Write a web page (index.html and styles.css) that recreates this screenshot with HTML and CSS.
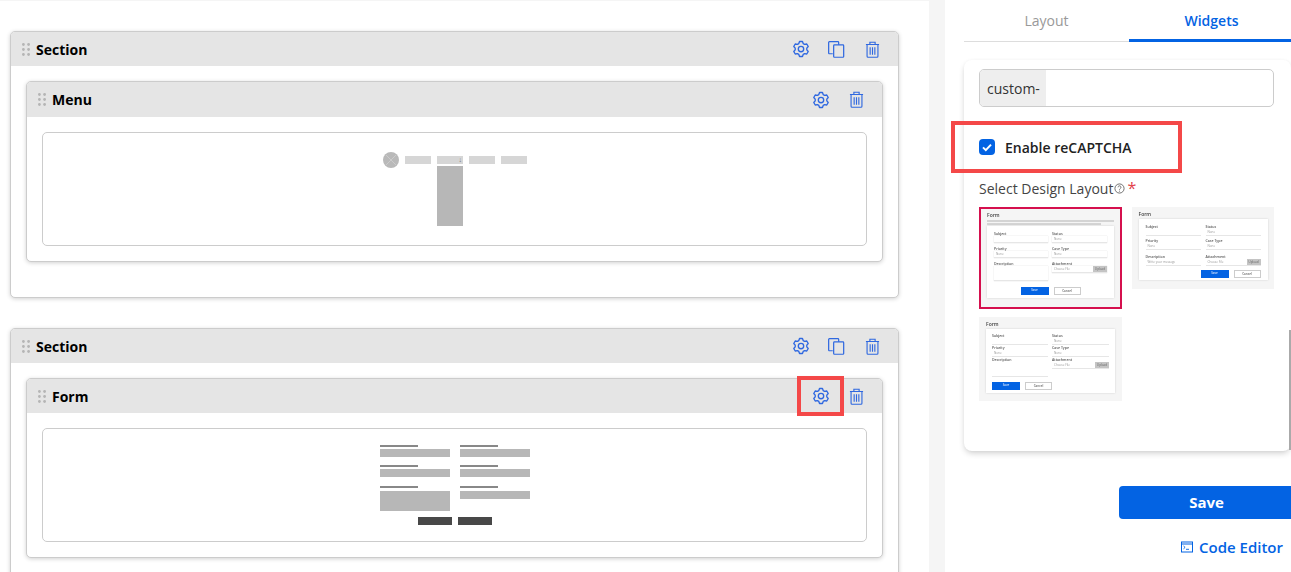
FILE: index.html
```html
<!DOCTYPE html>
<html lang="en">
<head>
    <meta charset="UTF-8">
    <meta name="viewport" content="width=device-width, initial-scale=1.0">
    <title>Form Builder</title>
    <link rel="stylesheet" href="styles.css">
</head>
<body>

    <!-- icons used by the section headers -->
    <svg class="sprite" xmlns="http://www.w3.org/2000/svg">
        <symbol id="icon-gear" viewBox="0 0 24 24">
            <polygon points="9.08,4.77 10.05,1.99 13.95,1.99 14.92,4.77 16.8,5.85 19.7,5.31 21.64,8.68 19.72,10.91 19.72,13.09 21.64,15.32 19.7,18.69 16.8,18.15 14.92,19.23 13.95,22.01 10.05,22.01 9.08,19.23 7.2,18.15 4.3,18.69 2.36,15.32 4.28,13.09 4.28,10.91 2.36,8.68 4.3,5.31 7.2,5.85" fill="none" stroke="currentColor" stroke-width="1.8" stroke-linejoin="round"/>
            <circle cx="12" cy="12" r="3.6" fill="none" stroke="currentColor" stroke-width="1.8"/>
        </symbol>
        <symbol id="icon-copy" viewBox="0 0 18 18">
            <path d="M5 13.5H1.5a.8.8 0 0 1-.8-.8V1.5a.8.8 0 0 1 .8-.8h9a.8.8 0 0 1 .8.8V4" fill="none" stroke="currentColor" stroke-width="1.3"/>
            <rect x="6" y="4.2" width="10.6" height="13" rx=".8" fill="none" stroke="currentColor" stroke-width="1.3"/>
        </symbol>
        <symbol id="icon-trash" viewBox="0 0 16 18">
            <path d="M1 3.6h14M5.2 3.4V1.2h5.6v2.2" fill="none" stroke="currentColor" stroke-width="1.2"/>
            <path d="M2.2 3.8v12.4a1 1 0 0 0 1 1h9.6a1 1 0 0 0 1-1V3.8" fill="none" stroke="currentColor" stroke-width="1.2"/>
            <path d="M5.5 6.5v8M8 6.5v8M10.5 6.5v8" fill="none" stroke="currentColor" stroke-width="1.2"/>
        </symbol>
        <symbol id="icon-drag" viewBox="0 0 8 13">
            <circle cx="1.4" cy="1.5" r="1.4"/><circle cx="6.6" cy="1.5" r="1.4"/>
            <circle cx="1.4" cy="6.5" r="1.4"/><circle cx="6.6" cy="6.5" r="1.4"/>
            <circle cx="1.4" cy="11.5" r="1.4"/><circle cx="6.6" cy="11.5" r="1.4"/>
        </symbol>
    </svg>

    <main class="canvas">
        <section class="block">
            <div class="block-head">
                <svg class="drag"><use href="#icon-drag"/></svg>
                <span class="block-title">Section</span>
                <div class="actions">
                    <span class="action"><svg class="ic-gear"><use href="#icon-gear"/></svg></span>
                    <span class="action"><svg class="ic-copy"><use href="#icon-copy"/></svg></span>
                    <span class="action"><svg class="ic-trash"><use href="#icon-trash"/></svg></span>
                </div>
            </div>
            <div class="block-body">
                <div class="block">
                    <div class="block-head block-head-tall">
                        <svg class="drag"><use href="#icon-drag"/></svg>
                        <span class="block-title">Menu</span>
                        <div class="actions">
                            <span class="action"><svg class="ic-gear"><use href="#icon-gear"/></svg></span>
                            <span class="action"><svg class="ic-trash"><use href="#icon-trash"/></svg></span>
                        </div>
                    </div>
                    <div class="block-body">
                        <div class="preview">
                            <div class="wf-menu">
                                <svg class="wf-logo" viewBox="0 0 16 16">
                                    <circle cx="8" cy="8" r="8" fill="#b9b9b9"/>
                                    <path d="M3 3l10 10M13 3L3 13" stroke="#cfcfcf" stroke-width=".8"/>
                                </svg>
                                <span class="wf-item"></span>
                                <span class="wf-item wf-open"><span class="wf-drop"></span></span>
                                <span class="wf-item"></span>
                                <span class="wf-item"></span>
                            </div>
                        </div>
                    </div>
                </div>
            </div>
        </section>

        <section class="block block-next">
            <div class="block-head">
                <svg class="drag"><use href="#icon-drag"/></svg>
                <span class="block-title">Section</span>
                <div class="actions">
                    <span class="action"><svg class="ic-gear"><use href="#icon-gear"/></svg></span>
                    <span class="action"><svg class="ic-copy"><use href="#icon-copy"/></svg></span>
                    <span class="action"><svg class="ic-trash"><use href="#icon-trash"/></svg></span>
                </div>
            </div>
            <div class="block-body">
                <div class="block">
                    <div class="block-head">
                        <svg class="drag"><use href="#icon-drag"/></svg>
                        <span class="block-title">Form</span>
                        <div class="actions">
                            <span class="action marked"><svg class="ic-gear"><use href="#icon-gear"/></svg></span>
                            <span class="action"><svg class="ic-trash"><use href="#icon-trash"/></svg></span>
                        </div>
                    </div>
                    <div class="block-body">
                        <div class="preview">
                            <div class="wf-form">
                                <div class="wf-field"><i></i><b></b></div>
                                <div class="wf-field"><i></i><b></b></div>
                                <div class="wf-field"><i></i><b></b></div>
                                <div class="wf-field"><i></i><b></b></div>
                                <div class="wf-field"><i></i><b class="wf-area"></b></div>
                                <div class="wf-field"><i></i><b></b></div>
                                <div class="wf-buttons"><span></span><span></span></div>
                            </div>
                        </div>
                    </div>
                </div>
            </div>
        </section>
    </main>

    <div class="gutter"></div>

    <aside class="panel">
        <nav class="tabs">
            <span class="tab">Layout</span>
            <span class="tab tab-active">Widgets</span>
        </nav>

        <div class="card">
            <div class="input-group">
                <span class="addon">custom-</span>
                <span class="input-rest"></span>
            </div>

            <div class="captcha">
                <span class="checkbox">
                    <svg viewBox="0 0 16 16" width="16" height="16"><path d="M4 8.4l2.8 2.7L12 5.6" fill="none" stroke="#fff" stroke-width="2"/></svg>
                </span>
                <span class="captcha-label">Enable reCAPTCHA</span>
            </div>

            <div class="design-label">
                Select Design Layout<svg class="help" viewBox="0 0 12 12" width="11" height="11"><circle cx="6" cy="6" r="5" fill="none" stroke="#555" stroke-width=".9"/><path d="M4.4 4.7a1.6 1.6 0 1 1 2.4 1.4c-.5.3-.8.6-.8 1.2M6 8.4v1" fill="none" stroke="#555" stroke-width=".9"/></svg><span class="star">*</span>
            </div>

            <div class="thumbs">
                <div class="thumb thumb-one">
                    <div class="th-title">Form</div>
                    <div class="th-desc"></div>
                    <div class="th-desc th-short"></div>
                    <div class="th-card">
                        <div class="th-grid">
                            <div class="th-f"><span>Subject</span><em></em></div>
                            <div class="th-f"><span>Status</span><em>None</em></div>
                            <div class="th-f"><span>Priority</span><em>None</em></div>
                            <div class="th-f"><span>Case Type</span><em>None</em></div>
                            <div class="th-f"><span>Description</span><em class="th-tall"></em></div>
                            <div class="th-f"><span>Attachment</span><em class="th-file">Choose File<u>Upload</u></em></div>
                        </div>
                        <div class="th-btns th-btns-center"><span class="th-save">Save</span><span class="th-cancel">Cancel</span></div>
                    </div>
                </div>

                <div class="thumb thumb-two">
                    <div class="th-title">Form</div>
                    <div class="th-card">
                        <div class="th-grid th-line">
                            <div class="th-f"><span>Subject</span><em></em></div>
                            <div class="th-f"><span>Status</span><em>None</em></div>
                            <div class="th-f"><span>Priority</span><em>None</em></div>
                            <div class="th-f"><span>Case Type</span><em>None</em></div>
                            <div class="th-f th-low"><span>Description</span><em>Write your message</em></div>
                            <div class="th-f th-low"><span>Attachment</span><em class="th-file">Choose File<u>Upload</u></em></div>
                        </div>
                        <div class="th-btns th-btns-right"><span class="th-save">Save</span><span class="th-cancel">Cancel</span></div>
                    </div>
                </div>

                <div class="thumb thumb-three">
                    <div class="th-title">Form</div>
                    <div class="th-card">
                        <div class="th-grid th-line">
                            <div class="th-f"><span>Subject</span><em></em></div>
                            <div class="th-f"><span>Status</span><em>None</em></div>
                            <div class="th-f"><span>Priority</span><em>None</em></div>
                            <div class="th-f"><span>Case Type</span><em>None</em></div>
                            <div class="th-f"><span>Description</span><em class="th-tall"></em></div>
                            <div class="th-f"><span>Attachment</span><em class="th-file">Choose File<u>Upload</u></em></div>
                        </div>
                        <div class="th-btns"><span class="th-save">Save</span><span class="th-cancel">Cancel</span></div>
                    </div>
                </div>
            </div>
            <span class="scroll-thumb"></span>
        </div>

        <button class="save">Save</button>

        <a class="code-editor">
            <svg viewBox="0 0 12 12" width="12" height="12">
                <rect x=".5" y="1" width="11" height="10" fill="none" stroke="#0363e3" stroke-width="1"/>
                <path d="M.5 3h11" stroke="#0363e3" stroke-width="1"/>
                <path d="M2.5 5l1.6 1.4-1.6 1.4M5 8.3h3" fill="none" stroke="#0363e3" stroke-width=".9"/>
            </svg>
            Code Editor
        </a>
    </aside>

</body>
</html>
```

FILE: styles.css
```css
html, body {
    margin: 0;
    height: 572px;
    overflow: hidden;
}

body {
    display: flex;
    font-family: "Open Sans", sans-serif;
    font-size: 14px;
    color: #333;
    background-color: #fff;
}

.sprite {
    display: none;
}

/* left side */
.canvas {
    width: 929px;
    flex: none;
    box-sizing: border-box;
    padding: 30px 30px 0 10px;
    border-top: 1px solid #f5f5f5;
}

.gutter {
    width: 16px;
    flex: none;
    background-color: #f5f5f5;
}

.block {
    background-color: #fff;
    border: 1px solid #ccc;
    border-radius: 5px;
    box-shadow: 0 1px 4px rgba(0, 0, 0, 0.18);
}

.block-next {
    margin-top: 30px;
}

.block-head {
    display: flex;
    align-items: center;
    height: 34px;
    padding-left: 11px;
    padding-right: 8px;
    background-color: #e5e5e5;
    border-radius: 4px 4px 0 0;
}

.block-head-tall {
    height: 35px;
}

.drag {
    width: 8px;
    height: 13px;
    fill: #b5b5b5;
    margin-right: 6px;
}

.block-title {
    font-weight: 700;
    color: #000;
}

.actions {
    display: flex;
    margin-left: auto;
}

.action {
    position: relative;
    display: flex;
    align-items: center;
    justify-content: center;
    width: 36px;
    height: 34px;
    color: #2f68e0;
}

.ic-gear {
    width: 18px;
    height: 18px;
    margin-left: 1px;
}

.ic-copy {
    width: 17px;
    height: 17px;
}

.ic-trash {
    width: 15px;
    height: 17px;
}

/* red marker drawn over the gear */
.marked::after {
    content: "";
    position: absolute;
    left: -5px;
    top: -3px;
    width: 39px;
    height: 32px;
    border: 4px solid #f44848;
}

.block-body {
    padding: 15px;
}

.block-body > .block {
    margin-bottom: 20px;
}

.preview {
    display: flex;
    justify-content: center;
    height: 112px;
    border: 1px solid #ccc;
    border-radius: 5px;
}

/* menu wireframe */
.wf-menu {
    display: flex;
    gap: 6px;
    padding-top: 19px;
    padding-left: 1px;
    align-items: flex-start;
}

.wf-logo {
    width: 16px;
    height: 16px;
}

.wf-item {
    position: relative;
    width: 26px;
    height: 8px;
    margin-top: 4px;
    background-color: #d6d6d6;
}

.wf-open::after {
    content: "↓";
    position: absolute;
    right: 1px;
    top: -1px;
    font-size: 7px;
    line-height: 10px;
    color: #777;
}

.wf-drop {
    display: block;
    height: 60px;
    margin-top: 10px;
    background-color: #b7b7b7;
}

/* form wireframe */
.wf-form {
    display: grid;
    grid-template-columns: 70px 70px;
    column-gap: 10px;
    row-gap: 8px;
    align-content: start;
    padding-top: 16px;
}

.wf-field i {
    display: block;
    width: 38px;
    height: 2px;
    margin-bottom: 2px;
    background-color: #888;
}

.wf-field b {
    display: block;
    height: 8px;
    background-color: #b7b7b7;
}

.wf-field .wf-area {
    height: 20px;
}

.wf-form .wf-field:nth-child(5),
.wf-form .wf-field:nth-child(6) {
    margin-top: 1px;
}

.wf-form .wf-field:nth-child(5) i,
.wf-form .wf-field:nth-child(6) i {
    margin-bottom: 3px;
}

.wf-form .wf-field:nth-child(6) {
    margin-bottom: -12px;
}

.wf-buttons {
    grid-column: 1 / 3;
    display: flex;
    justify-content: center;
    gap: 6px;
    margin-top: -2px;
}

.wf-buttons span {
    width: 34px;
    height: 8px;
    background-color: #484848;
}

/* right side */
.panel {
    flex: 1;
    min-width: 0;
    display: flex;
    flex-direction: column;
    align-items: flex-end;
    overflow: hidden;
}

.tabs {
    display: flex;
    flex: none;
    width: 327px;
    height: 42px;
    box-sizing: border-box;
    border-bottom: 1px solid #ddd;
}

.tab {
    flex: none;
    width: 165px;
    padding-top: 11px;
    text-align: center;
    color: #999;
}

.tab-active {
    height: 42px;
    box-sizing: border-box;
    font-weight: 600;
    color: #0363e3;
    border-bottom: 3px solid #0363e3;
}

.card {
    position: relative;
    flex: none;
    width: 327px;
    height: 391px;
    margin-top: 18px;
    box-sizing: border-box;
    padding: 9px 17px 0 15px;
    border-radius: 8px;
    box-shadow: 0 3px 6px -1px rgba(0, 0, 0, 0.2), 0 0 3px rgba(0, 0, 0, 0.03);
}

.input-group {
    display: flex;
    height: 38px;
    box-sizing: border-box;
    border: 1px solid #ccc;
    border-radius: 5px;
    overflow: hidden;
}

.addon {
    width: 66px;
    box-sizing: border-box;
    padding-left: 7px;
    line-height: 37px;
    background-color: #eee;
}

.captcha {
    display: flex;
    align-items: center;
    width: 231px;
    height: 52px;
    margin-top: 14px;
    margin-left: -28px;
    box-sizing: border-box;
    padding-left: 24px;
    border: 4px solid #f44848;
}

.checkbox {
    width: 16px;
    height: 16px;
    border-radius: 4px;
    background-color: #0363e3;
}

.checkbox svg {
    display: block;
}

.captcha-label {
    margin-left: 10px;
    font-weight: 600;
    color: #222;
}

.design-label {
    display: flex;
    align-items: center;
    height: 20px;
    margin-top: 5px;
    color: #444;
}

.help {
    margin-left: 1px;
}

.star {
    margin-left: 2px;
    font-size: 16px;
    color: #e2434b;
}

.thumbs {
    display: flex;
    flex-wrap: wrap;
    align-items: flex-start;
    column-gap: 10px;
    row-gap: 8px;
    margin-top: 9px;
}

/* the layout pictures are small scaled-down previews, so their content is soft */
.thumb {
    box-sizing: border-box;
    background-color: #f5f5f5;
    font-size: 3.5px;
    font-weight: 600;
    line-height: 4px;
    color: #555;
}

.thumb > * {
    filter: blur(0.45px);
}

.thumb-one {
    width: 143px;
    height: 102px;
    padding: 2px 6px;
    border: 2px solid #d5104e;
}

.thumb-two {
    width: 142px;
    height: 82px;
    padding: 3px 6.5px;
}

.thumb-three {
    width: 143px;
    height: 84px;
    padding: 4px 7px;
}

.th-title {
    font-size: 5px;
    line-height: 8px;
    color: #444;
}

.thumb-two .th-title {
    margin-bottom: 1px;
}

.thumb-three .th-title {
    line-height: 6px;
    margin-bottom: 2px;
}

.th-desc {
    height: 2px;
    margin-top: 1px;
    background-color: #d4d4d4;
}

.th-short {
    width: 90%;
    margin-bottom: 1px;
}

.th-card {
    box-sizing: border-box;
    padding: 6px 7px 0;
    background-color: #fff;
    box-shadow: 0 0 2px rgba(0, 0, 0, 0.15);
}

.thumb-one .th-card {
    height: 72px;
}

.thumb-two .th-card {
    height: 61px;
}

.thumb-three .th-card {
    height: 64px;
    padding: 5px 6px 0;
}

.th-grid {
    display: grid;
    grid-template-columns: 54px 55px;
    column-gap: 4px;
    row-gap: 4px;
}

.thumb-two .th-grid {
    grid-template-columns: 55px 55px;
    column-gap: 5px;
    row-gap: 3px;
}

.thumb-three .th-grid {
    grid-template-columns: 56px 57px;
    row-gap: 1px;
}

.th-low {
    margin-top: 2px;
}

.th-f span {
    display: block;
}

.th-f em {
    display: block;
    height: 6px;
    font-style: normal;
    font-weight: 400;
    font-size: 3px;
    line-height: 6px;
    padding-left: 2px;
    color: #999;
    border-bottom: 1px solid #e6e6e6;
    box-shadow: 0 0 1px rgba(0, 0, 0, 0.2);
}

.th-line .th-f em {
    box-shadow: none;
}

.th-f .th-tall {
    height: 14px;
}

.th-file {
    display: flex !important;
    justify-content: space-between;
}

.th-file u {
    width: 14px;
    text-align: center;
    text-decoration: none;
    color: #666;
    background-color: #c4c4c4;
}

.th-btns {
    display: flex;
    gap: 5px;
    margin-top: 5px;
    text-align: center;
    font-size: 3px;
    line-height: 6px;
}

.th-btns-center {
    justify-content: center;
    margin-top: 6px;
}

.th-btns-right {
    justify-content: flex-end;
    margin-top: 4px;
}

.th-save {
    width: 28px;
    color: #cfe0fa;
    background-color: #0363e3;
}

.th-cancel {
    width: 27px;
    color: #666;
    border: 1px solid #ccc;
    box-sizing: border-box;
}

.scroll-thumb {
    position: absolute;
    right: 0;
    top: 270px;
    width: 2px;
    height: 120px;
    background-color: #aaa;
}

.save {
    flex: none;
    width: 175px;
    height: 33px;
    margin-top: 35px;
    margin-right: -3px;
    padding: 0 0 2px;
    border: none;
    border-radius: 4px 0 0 4px;
    background-color: #0363e3;
    color: #fff;
    font-family: "Open Sans", sans-serif;
    font-size: 15px;
    font-weight: 700;
}

.code-editor {
    display: flex;
    align-items: center;
    gap: 6px;
    margin-top: 18px;
    margin-right: 8px;
    font-size: 15px;
    font-weight: 600;
    color: #0363e3;
}
```
